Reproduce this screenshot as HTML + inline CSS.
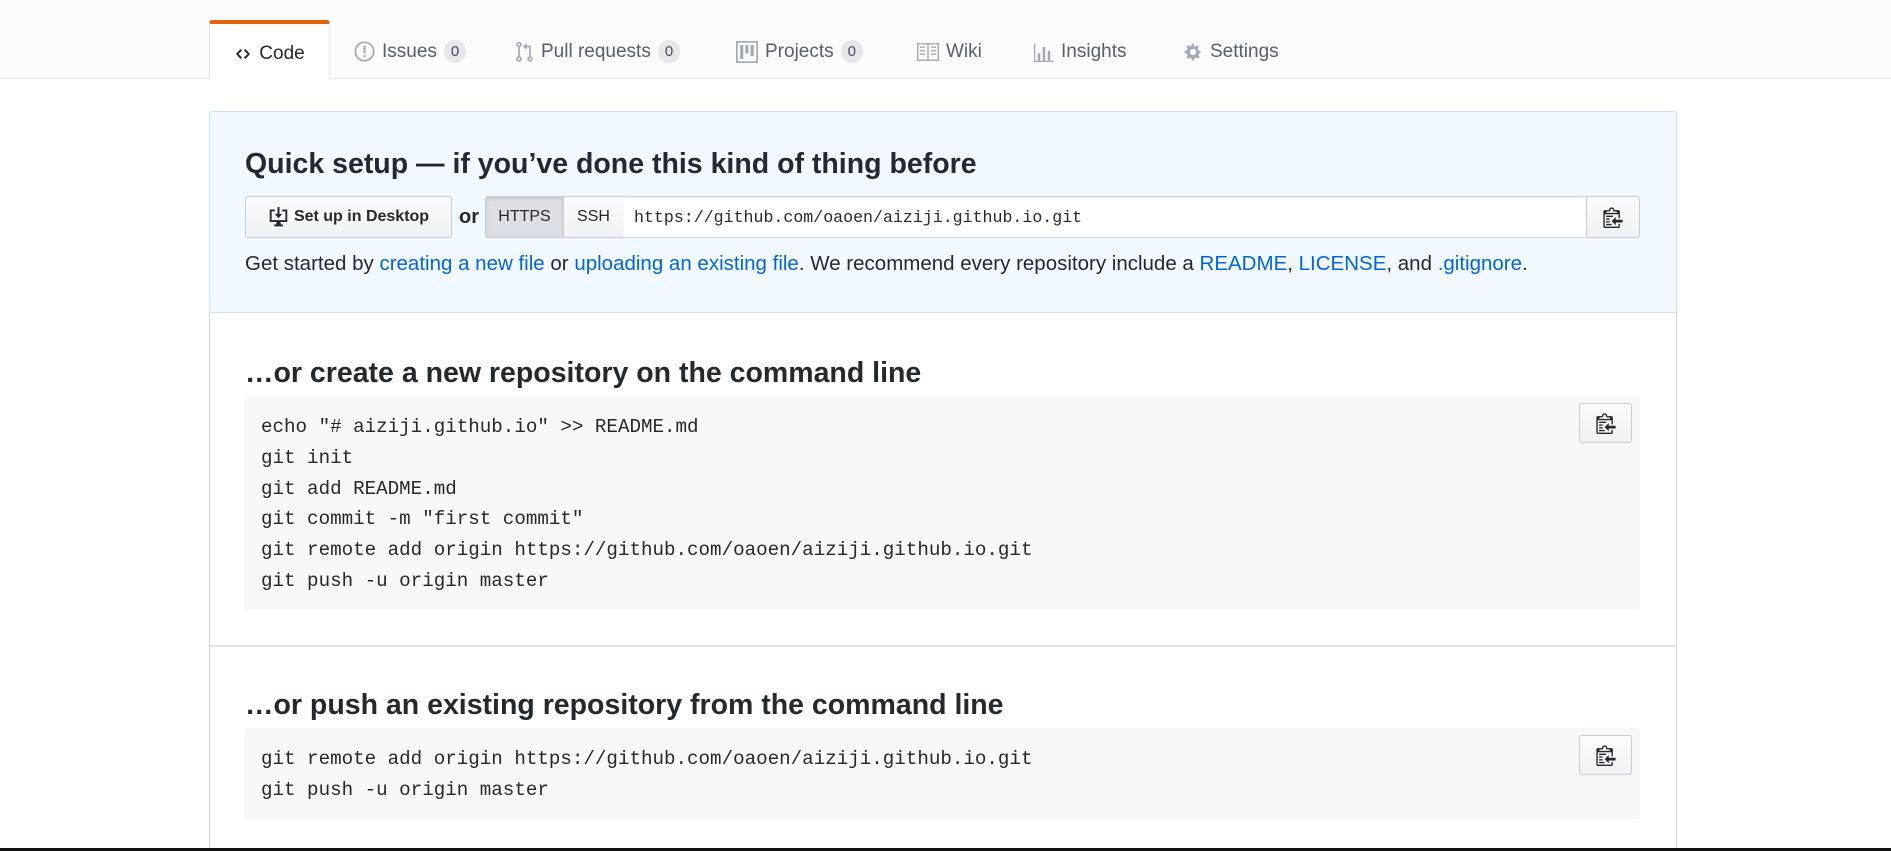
<!DOCTYPE html>
<html style="overflow:hidden;width:1891px;height:851px"><head><meta charset="utf-8"><style>
*{box-sizing:border-box;margin:0;padding:0}
body{width:1891px;height:851px;background:#fff;font-family:"Liberation Sans",sans-serif;color:#24292e;position:relative;overflow:hidden}
.nav{position:absolute;left:0;top:0;width:1891px;height:79px;background:#fafbfc;border-bottom:1px solid #e1e4e8}
.tab{position:absolute;top:24px;height:55px;font-size:19px;color:#586069;display:flex;align-items:center;white-space:nowrap}
.tab svg{margin-right:7px}
.cnt{display:inline-block;background:#e5e7ea;border-radius:12px;padding:2px 7px;font-size:15px;color:#444d56;margin-left:7px;line-height:19px}
.code{left:209px;top:20px;width:121px;background:#fff;border:1px solid #e1e4e8;border-bottom:none;border-top:4px solid #e36209;border-radius:3px 3px 0 0;color:#24292e;justify-content:center;height:60px;padding-top:4px}
.box{position:absolute;left:209px;top:111px;width:1468px;height:740px;border:1px solid #d1d5da;border-bottom:none;border-radius:3px 3px 0 0}
.blue{position:absolute;left:0;top:0;width:1466px;height:201px;background:#f1f8ff;border-bottom:1px solid #c8e1ff}
.boxb{position:absolute;left:209px;top:111px;width:1468px;height:202px;border:1px solid #c8e1ff;border-radius:3px 3px 0 0}
h3{position:absolute;font-size:28.5px;font-weight:bold;white-space:nowrap}
.btn{position:absolute;border:1px solid #c9ccd0;background:linear-gradient(#fafbfc,#eff3f6);border-radius:3px;font-size:17px;display:flex;align-items:center;justify-content:center}
pre{position:absolute;background:#f6f8fa;border-radius:3px;font-family:"Liberation Mono",monospace;font-size:19.2px;line-height:30.8px;padding:16px 16px;color:#24292e}
a{color:#0366d6;text-decoration:none}
</style></head><body>
<div class="nav"></div>
<div class="tab code"><svg width="18" height="16" viewBox="0 0 14 16"><path d="M9.5 3L8 4.5 11.5 8 8 11.5 9.5 13 14 8zM4.5 3L0 8l4.5 5L6 11.5 2.5 8 6 4.5z" fill="#24292e"/></svg>Code</div>
<div class="tab" style="left:354px"><svg width="21" height="21" viewBox="0 0 16 16"><circle cx="8" cy="8" r="7" fill="none" stroke="#a3aab1" stroke-width="1.3"/><rect x="7.2" y="3.5" width="1.6" height="6" fill="#a3aab1"/><rect x="7.2" y="10.8" width="1.6" height="1.6" fill="#a3aab1"/></svg>Issues<span class="cnt">0</span></div>
<div class="tab" style="left:515px"><svg width="19" height="22" viewBox="0 0 12 16"><g fill="none" stroke="#a3aab1" stroke-width="1.2"><circle cx="2" cy="13" r="1.4"/><circle cx="2" cy="2.5" r="1.4"/><circle cx="10" cy="13" r="1.4"/><path d="M2 4v7.5M10 11.5V4H6M7.5 2.3L5.8 4l1.7 1.7"/></g></svg>Pull requests<span class="cnt">0</span></div>
<div class="tab" style="left:736px"><svg width="22" height="22" viewBox="0 0 16 16"><rect x="0.6" y="0.6" width="14.8" height="14.8" fill="none" stroke="#a3aab1" stroke-width="1.2"/><rect x="3" y="3" width="2.3" height="10" fill="#a3aab1"/><rect x="6.8" y="3" width="2.3" height="6" fill="#a3aab1"/><rect x="10.6" y="3" width="2.3" height="8" fill="#a3aab1"/></svg>Projects<span class="cnt">0</span></div>
<div class="tab" style="left:917px"><svg width="22" height="18" viewBox="0 0 16 13"><g fill="none" stroke="#a3aab1" stroke-width="1"><rect x="0.5" y="0.5" width="15" height="12"/><path d="M8 0.5v12M2 3h4M2 5.5h4M2 8h4M10 3h4M10 5.5h4M10 8h4"/></g></svg>Wiki</div>
<div class="tab" style="left:1034px"><svg width="20" height="22" viewBox="0 0 16 16"><g fill="#a3aab1"><rect x="0" y="15" width="16" height="1"/><rect x="0" y="1" width="1" height="15"/><rect x="3" y="9" width="2" height="6"/><rect x="7" y="4" width="2" height="11"/><rect x="11" y="7" width="2" height="8"/></g></svg>Insights</div>
<div class="tab" style="left:1183px"><svg width="20" height="22" viewBox="0 0 16 16"><path fill="#a3aab1" d="M14 8.8V7.2l-1.9-.6-.4-1 .9-1.8-1.1-1.1-1.8.9-1-.4L8.8 1.3H7.2l-.6 1.9-1 .4-1.8-.9-1.1 1.1.9 1.8-.4 1-1.9.6v1.6l1.9.6.4 1-.9 1.8 1.1 1.1 1.8-.9 1 .4.6 1.9h1.6l.6-1.9 1-.4 1.8.9 1.1-1.1-.9-1.8.4-1zM8 10.5A2.5 2.5 0 118 5.5a2.5 2.5 0 010 5z"/></svg>Settings</div>

<div class="box"><div class="blue"></div></div>
<div class="boxb"></div>
<h3 style="left:245px;top:148px">Quick setup — if you’ve done this kind of thing before</h3>
<div class="btn" style="left:245px;top:196px;width:207px;height:42px;font-weight:bold;font-size:16px"><svg width="21" height="20" viewBox="0 0 16 16" style="margin-right:5px"><path fill="#24292e" d="M1 2h4v1.5H2.5v7h11v-7H11V2h4v10H9.5l.5 2h1.5v1.5h-7V14H6l.5-2H1z"/><path fill="#24292e" d="M7.2 0h1.6v5.5H11L8 9 5 5.5h2.2z"/></svg>Set up in Desktop</div>
<div style="position:absolute;left:459px;top:206px;font-size:20px;font-weight:bold">or</div>
<div class="btn" style="left:485px;top:196px;width:79px;height:42px;background:#dcdfe3;border-radius:3px 0 0 3px;box-shadow:inset 0 2px 3px rgba(0,0,0,.1);font-size:16px">HTTPS</div>
<div class="btn" style="left:563px;top:196px;width:61px;height:42px;border-radius:0;font-size:16px">SSH</div>
<div style="position:absolute;left:623px;top:196px;width:964px;height:42px;background:#fff;border:1px solid #d1d5da;border-left:none;box-shadow:inset 0 1px 2px rgba(27,31,35,.075);font-family:'Liberation Mono',monospace;font-size:16.6px;line-height:42px;padding-left:11px">https://github.com/oaoen/aiziji.github.io.git</div>
<div class="btn" style="left:1586px;top:196px;width:54px;height:42px;border-radius:0 3px 3px 0"><svg width="20" height="22" viewBox="0 0 14 16"><path fill="#24292e" d="M2 13h4v1H2zm5-6H2v1h5zm2 3V8l-3 3 3 3v-2h5v-2zM4.5 9H2v1h2.5zM2 12h2.5v-1H2zm9 1h1v2c0 .55-.45 1-1 1H1c-.55 0-1-.45-1-1V4c0-.55.45-1 1-1h3c0-1.110.89-2 2-2s2 .89 2 2h3c.55 0 1 .45 1 1v5h-1V6H1v9h10zM2 5h8c0-.55-.45-1-1-1H8c-.55 0-1-.45-1-1s-.45-1-1-1-1 .45-1 1-.45 1-1 1H3c-.55 0-1 .45-1 1z"/></svg></div>
<div style="position:absolute;left:245px;top:252px;font-size:20.5px;white-space:nowrap;color:#24292e">Get started by <a>creating a new file</a> or <a>uploading an existing file</a>. We recommend every repository include a <a>README</a>, <a>LICENSE</a>, and <a>.gitignore</a>.</div>

<h3 style="left:245px;top:357px">…or create a new repository on the command line</h3>
<pre style="left:245px;top:396px;width:1395px;height:214px">echo "# aiziji.github.io" &gt;&gt; README.md
git init
git add README.md
git commit -m "first commit"
git remote add origin https://github.com/oaoen/aiziji.github.io.git
git push -u origin master</pre>
<div class="btn" style="left:1579px;top:403px;width:53px;height:40px"><svg width="20" height="22" viewBox="0 0 14 16"><path fill="#24292e" d="M2 13h4v1H2zm5-6H2v1h5zm2 3V8l-3 3 3 3v-2h5v-2zM4.5 9H2v1h2.5zM2 12h2.5v-1H2zm9 1h1v2c0 .55-.45 1-1 1H1c-.55 0-1-.45-1-1V4c0-.55.45-1 1-1h3c0-1.11.89-2 2-2s2 .89 2 2h3c.55 0 1 .45 1 1v5h-1V6H1v9h10zM2 5h8c0-.55-.45-1-1-1H8c-.55 0-1-.45-1-1s-.45-1-1-1-1 .45-1 1-.45 1-1 1H3c-.55 0-1 .45-1 1z"/></svg></div>
<div style="position:absolute;left:210px;top:645px;width:1466px;height:2px;background:#e1e4e8"></div>

<h3 style="left:245px;top:689px">…or push an existing repository from the command line</h3>
<pre style="left:245px;top:728px;width:1395px;height:91px">git remote add origin https://github.com/oaoen/aiziji.github.io.git
git push -u origin master</pre>
<div class="btn" style="left:1579px;top:735px;width:53px;height:40px"><svg width="20" height="22" viewBox="0 0 14 16"><path fill="#24292e" d="M2 13h4v1H2zm5-6H2v1h5zm2 3V8l-3 3 3 3v-2h5v-2zM4.5 9H2v1h2.5zM2 12h2.5v-1H2zm9 1h1v2c0 .55-.45 1-1 1H1c-.55 0-1-.45-1-1V4c0-.55.45-1 1-1h3c0-1.11.89-2 2-2s2 .89 2 2h3c.55 0 1 .45 1 1v5h-1V6H1v9h10zM2 5h8c0-.55-.45-1-1-1H8c-.55 0-1-.45-1-1s-.45-1-1-1-1 .45-1 1-.45 1-1 1H3c-.55 0-1 .45-1 1z"/></svg></div>
<div style="position:absolute;left:0;top:848px;width:1891px;height:3px;background:#111"></div>
</body></html>
